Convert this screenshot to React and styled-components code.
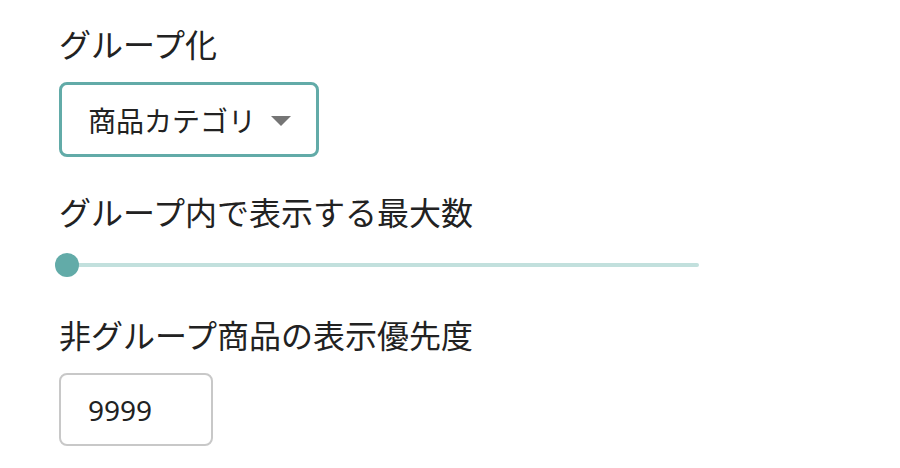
import React, { useState } from "react";
import styled, { createGlobalStyle } from "styled-components";

const GlobalStyle = createGlobalStyle`
  html, body {
    margin: 0;
    padding: 0;
    background: #ffffff;
  }
  body {
    font-family: "Noto Sans", "Noto Sans CJK JP", sans-serif;
    color: #222222;
  }
`;

const App = () => {
  const [value] = useState(0);
  const [priority, setPriority] = useState("9999");

  return (
    <>
      <GlobalStyle />
      <Page>
        <Field>
          <Label>グループ化</Label>
          <Select>
            <SelectText>商品カテゴリ</SelectText>
            <Arrow />
          </Select>
        </Field>
        <Field>
          <Label>グループ内で表示する最大数</Label>
          <SliderRow>
            <Track>
              <Thumb style={{ left: `${value}%` }} />
            </Track>
          </SliderRow>
        </Field>
        <Field>
          <Label>非グループ商品の表示優先度</Label>
          <NumberInput
            value={priority}
            onChange={(e) => setPriority(e.target.value)}
          />
        </Field>
      </Page>
    </>
  );
};

export default App;

const Page = styled.div`
  display: flex;
  flex-direction: column;
  gap: 31px;
  padding: 20px 0 0 59px;
`;

const Field = styled.div`
  display: flex;
  flex-direction: column;
  align-items: flex-start;
`;

const Label = styled.div`
  font-family: "Noto Sans CJK JP", "Noto Sans", sans-serif;
  font-size: 32px;
  line-height: 46px;
  height: 46px;
  margin-bottom: 16px;
  color: #222222;
`;

const Select = styled.div`
  display: flex;
  align-items: center;
  width: 260px;
  height: 75px;
  box-sizing: border-box;
  border: 3px solid #62aba8;
  border-radius: 8px;
  padding-left: 26px;
`;

const SelectText = styled.span`
  font-family: "Noto Sans CJK JP", "Noto Sans", sans-serif;
  font-size: 28px;
  color: #222222;
`;

const Arrow = styled.span`
  width: 0;
  height: 0;
  margin-left: 15px;
  margin-top: 2px;
  border-left: 10px solid transparent;
  border-right: 10px solid transparent;
  border-top: 10px solid #757575;
`;

const SliderRow = styled.div`
  display: flex;
  align-items: center;
  height: 30px;
  padding-left: 8px;
`;

const Track = styled.div`
  position: relative;
  width: 632px;
  height: 4px;
  border-radius: 2px;
  background: #c2e0dd;
`;

const Thumb = styled.span`
  position: absolute;
  top: 50%;
  width: 24px;
  height: 24px;
  border-radius: 50%;
  background: #62aba8;
  transform: translate(-50%, -50%);
`;

const NumberInput = styled.input`
  width: 154px;
  height: 73px;
  box-sizing: border-box;
  border: 2px solid #c8c8c8;
  border-radius: 8px;
  padding: 0 0 0 27px;
  font-family: "Noto Sans", "Noto Sans CJK JP", sans-serif;
  font-size: 28px;
  color: #222222;
  outline: none;
  background: #ffffff;
`;
